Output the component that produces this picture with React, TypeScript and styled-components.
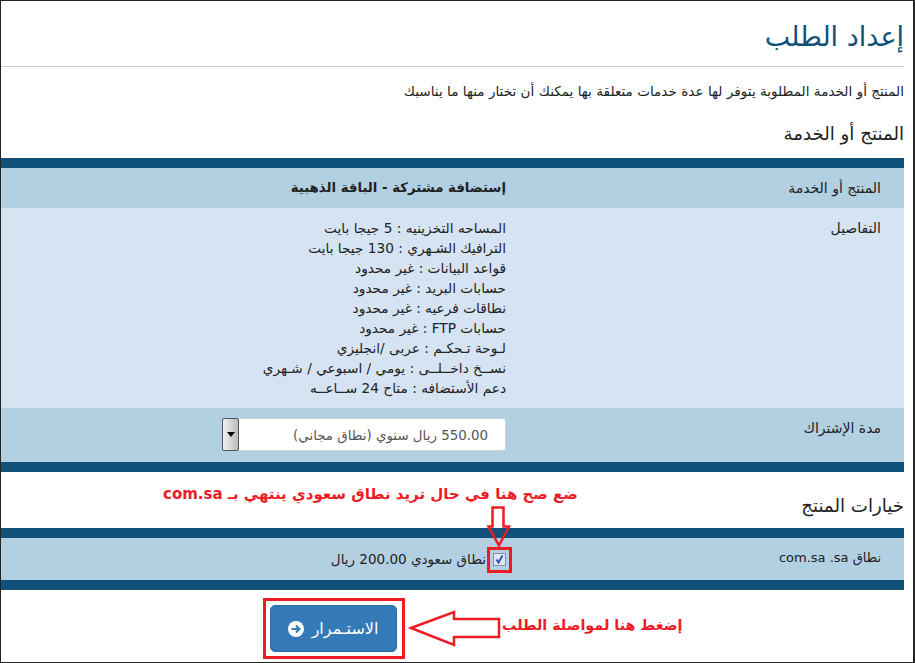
import React from "react";
import styled, { createGlobalStyle } from "styled-components";

const Global = createGlobalStyle`
  html, body { margin: 0; padding: 0; background: #fff; }
  body { font-family: "DejaVu Sans", sans-serif; color: #222; }
  * { box-sizing: border-box; }
`;
const Frame = styled.div`
  position: relative; width: 915px; height: 663px; overflow: hidden; background: #fff;
  border: 1px solid #222; border-width: 1px 2px 1px 1px; padding-right: 9px;
`;
const Page = styled.main`display: flex; flex-direction: column; direction: rtl;`;
const Title = styled.h1`
  margin: 0; height: 66px; padding: 14px 0 0 0; font-size: 27px; line-height: 44px; font-weight: 400; color: #0f5179;
  border-bottom: 1px solid #ccc; font-family: "DejaVu Sans", sans-serif; letter-spacing: -1px;
`;
const Intro = styled.p`margin: 0; height: 48px; padding-top: 14px; font: 13.6px/20px "DejaVu Sans", sans-serif; color: #222;`;
const Section = styled.h3`margin: 0; font: 400 18.2px/26px "DejaVu Sans", sans-serif; color: #222; letter-spacing: -0.6px;`;
const Band = styled.div`
  border-top: 10px solid #0f5179; border-bottom: 10px solid #0f5179; display: flex; flex-direction: column;
`;
const Row = styled.div<{ $light?: boolean; $h: number }>`
  display: grid; grid-template-columns: 398px 1fr; height: ${p => p.$h}px;
  background: ${p => (p.$light ? "#d6e3f3" : "#b3cfe2")};
  font: 13.7px/20px "DejaVu Sans", sans-serif; color: #222;
`;
const Label = styled.div<{ $small?: boolean }>`padding: 10px 23px 0 0; font-size: ${p => (p.$small ? 13 : 14)}px;`;
const Value = styled.div`padding-top: 10px; font-weight: 700; font-size: 13.3px;`;
const Lines = styled.div`display: flex; flex-direction: column; padding-top: 10px;`;
const SelectWrap = styled.div`padding-top: 10px;`;
const SelectBox = styled.div`
  width: 284px; height: 33px; background: #fff; border: 1px solid #cdd7de; border-radius: 3px;
  display: flex; justify-content: space-between; align-items: center; padding-right: 17px; color: #555; font-size: 13.4px;
`;
const SelectLabel = styled.span`padding-top: 3px;`;
const SelectArrow = styled.span`
  width: 17px; height: 33px; margin-left: -1px; background: linear-gradient(90deg,#f0f0f0,#bbb); border: 1px solid #555; border-radius: 2px;
  display: flex; align-items: center; justify-content: center;
  &::after { content: ""; border: 4px solid transparent; border-top: 5px solid #000; border-bottom: 0; }
`;
const ProductHead = styled(Section)`padding-top: 6px; height: 43px;`;
const OptionsHead = styled(Section)`height: 56px; padding-top: 21px;`;
const Check = styled.span`
  width: 13px; height: 13px; border: 1px solid #8a8f98; background: #dfe6f1; display: inline-flex; align-items: center; justify-content: center;
`;
const OptionValue = styled.div`display: flex; align-items: center; gap: 7px; height: 42px; font-size: 13.5px;`;
const ButtonRow = styled.div`display: flex; justify-content: center; padding: 15px 239px 0 0; direction: ltr;`;
const Button = styled.div`
  width: 127px; height: 47px; background: #337ab7; border: 1px solid #2e6da4; border-radius: 5px; color: #fff;
  display: flex; align-items: center; justify-content: center; gap: 8px; font: 16px "DejaVu Sans", sans-serif;
`;
const Note = styled.div<{ $x: number; $y: number; $size: number }>`
  position: absolute; left: ${p => p.$x}px; top: ${p => p.$y}px; white-space: nowrap; direction: rtl;
  color: #ed1c24; font: 700 ${p => p.$size}px/20px "DejaVu Sans", sans-serif;
`;
const RedBox = styled.div<{ $x: number; $y: number; $w: number; $h: number }>`
  position: absolute; left: ${p => p.$x}px; top: ${p => p.$y}px; width: ${p => p.$w}px; height: ${p => p.$h}px; border: 3px solid #ed1c24;
`;
const Overlay = styled.svg`position: absolute; left: 0; top: 0; pointer-events: none;`;

const details = [
  "المساحه التخزينيه : 5 جيجا بايت",
  "الترافيك الشـهري : 130 جيجا بايت",
  "قواعد البيانات : غير محدود",
  "حسابات البريد : غير محدود",
  "نطاقات فرعيه : غير محدود",
  "حسابات FTP : غير محدود",
  "لـوحة تـحكـم : عربى /انجليزي",
  "نســخ داخــلــى : يومي / اسبوعي / شـهري",
  "دعم الأستضافه : متاح 24 ســاعــه",
];

export default function App() {
  return (
    <Frame>
      <Global />
      <Page>
        <Title>إعداد الطلب</Title>
        <Intro>المنتج أو الخدمة المطلوبة يتوفر لها عدة خدمات متعلقة بها يمكنك أن تختار منها ما يناسبك</Intro>
        <ProductHead>المنتج أو الخدمة</ProductHead>
        <Band>
          <Row $h={40}><Label>المنتج أو الخدمة</Label><Value>إستضافة مشتركة - الباقة الذهبية</Value></Row>
          <Row $h={200} $light><Label>التفاصيل</Label><Lines>{details.map(d => <div key={d}>{d}</div>)}</Lines></Row>
          <Row $h={54}>
            <Label>مدة الإشتراك</Label>
            <SelectWrap>
              <SelectBox><SelectLabel>550.00 ريال سنوي (نطاق مجاني)</SelectLabel><SelectArrow /></SelectBox>
            </SelectWrap>
          </Row>
        </Band>
        <OptionsHead>خيارات المنتج</OptionsHead>
        <Band>
          <Row $h={42}>
            <Label $small>نطاق com.sa .sa</Label>
            <OptionValue>
              <Check>
                <svg width="11" height="11" viewBox="0 0 11 11"><path d="M2.5 5.5l2 3 4-7" fill="none" stroke="#2a4fb0" strokeWidth="1.8" /></svg>
              </Check>
              نطاق سعودي 200.00 ريال
            </OptionValue>
          </Row>
        </Band>
        <ButtonRow>
          <Button>
            <svg width="16" height="16" viewBox="0 0 16 16">
              <circle cx="8" cy="8" r="8" fill="#fff" />
              <path d="M3.5 8h8M8 4.5L11.5 8 8 11.5" fill="none" stroke="#337ab7" strokeWidth="2" />
            </svg>
            الاستـمرار
          </Button>
        </ButtonRow>
      </Page>

      <Note $x={162} $y={483} $size={15}>ضع صح هنا في حال تريد نطاق سعودي ينتهي بـ com.sa</Note>
      <Note $x={501} $y={614} $size={14.3}>إضغط هنا لمواصلة الطلب</Note>
      <RedBox $x={486} $y={546} $w={25} $h={26} />
      <RedBox $x={262} $y={597} $w={142} $h={61} />
      <Overlay width="913" height="661">
        <path d="M491.5 506.5h11v19h5.5l-10 19-10.5-19h4z" fill="none" stroke="#ed1c24" strokeWidth="2.5" />
        <path d="M410 627l43-16v7h45v18h-45v8z" fill="none" stroke="#ed1c24" strokeWidth="2.5" />
      </Overlay>
    </Frame>
  );
}
